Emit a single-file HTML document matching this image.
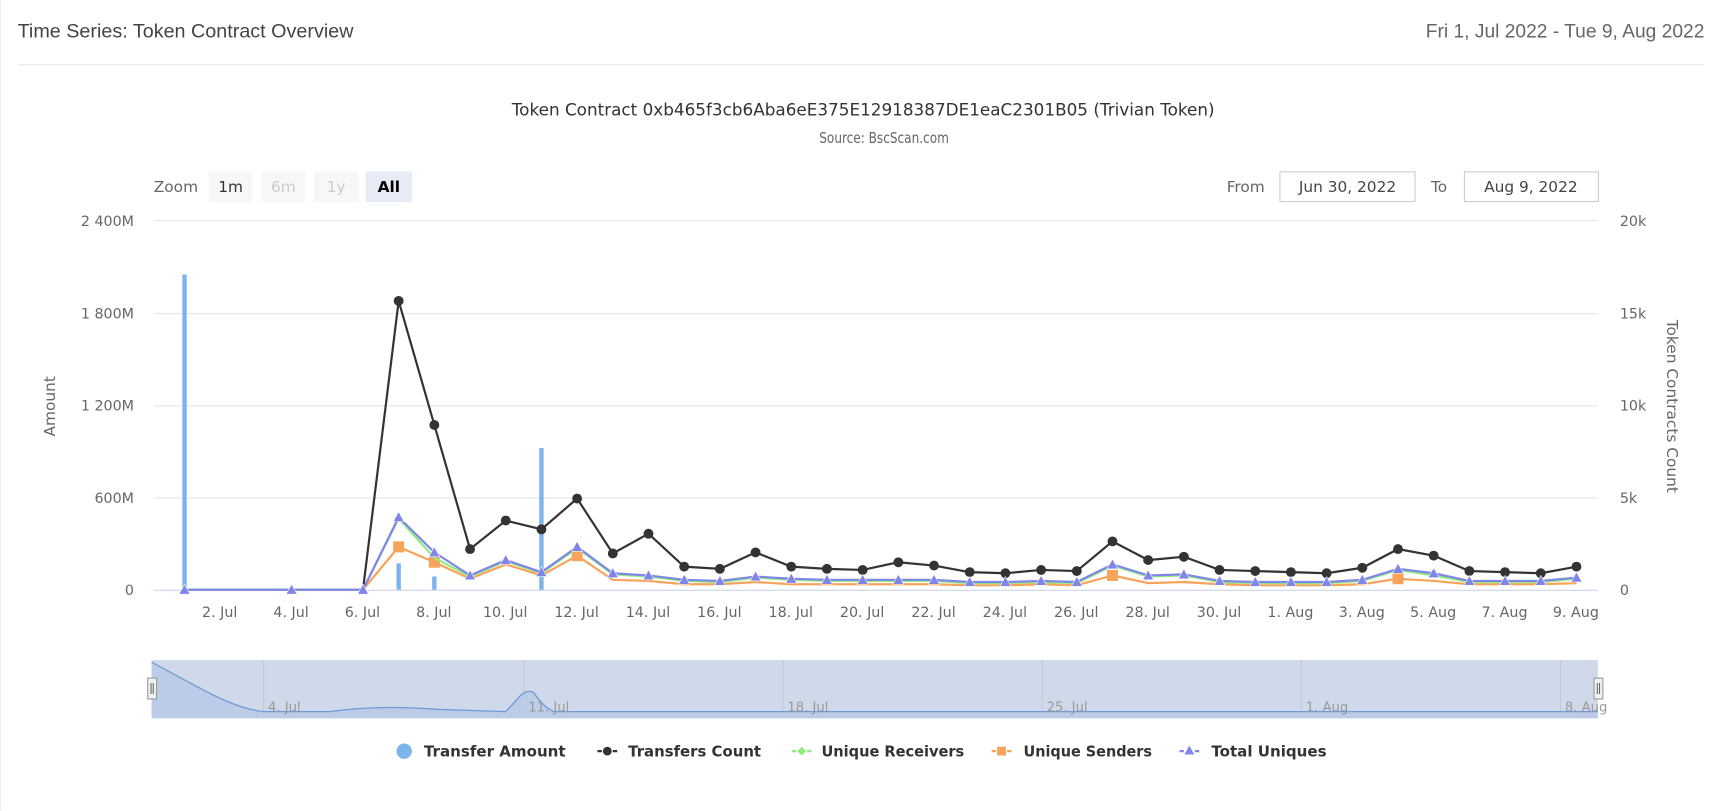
<!DOCTYPE html>
<html><head><meta charset="utf-8"><style>
html,body{margin:0;padding:0;background:#fff;}
svg{display:block;font-family:"Liberation Sans",sans-serif;}
</style></head><body>
<svg width="1722" height="811" viewBox="0 0 1568 738.5" xmlns="http://www.w3.org/2000/svg">
<rect x="0" y="0" width="1568" height="738.5" fill="#fff"/>
<line x1="0.5" y1="0" x2="0.5" y2="738" stroke="#eee"/>
<text x="16" y="34" font-size="18" fill="#444">Time Series: Token Contract Overview</text>
<text x="1552" y="34" font-size="17.5" fill="#666" text-anchor="end">Fri 1, Jul 2022 - Tue 9, Aug 2022</text>
<line x1="16" y1="59" x2="1552" y2="59" stroke="#eee" stroke-width="1.5"/>
<g font-family="DejaVu Sans,sans-serif">
<text x="786" y="105" font-size="15" fill="#333" text-anchor="middle" textLength="640" lengthAdjust="spacingAndGlyphs">Token Contract 0xb465f3cb6Aba6eE375E12918387DE1eaC2301B05 (Trivian Token)</text>
<text x="805" y="130" font-size="14" fill="#666" text-anchor="middle" textLength="118" lengthAdjust="spacingAndGlyphs">Source: BscScan.com</text>
<text x="140" y="175" font-size="14" fill="#666">Zoom</text>
<rect x="190" y="156" width="40" height="28" fill="#f7f7f7"/><text x="210" y="175" font-size="14" fill="#333" text-anchor="middle">1m</text>
<rect x="238" y="156" width="40" height="28" fill="#f7f7f7"/><text x="258" y="175" font-size="14" fill="#ccc" text-anchor="middle">6m</text>
<rect x="286" y="156" width="40" height="28" fill="#f7f7f7"/><text x="306" y="175" font-size="14" fill="#ccc" text-anchor="middle">1y</text>
<rect x="333" y="156" width="42" height="28" fill="#e6ebf5"/><text x="354" y="175" font-size="14" fill="#000" font-weight="bold" text-anchor="middle">All</text>
<text x="1117" y="175" font-size="14" fill="#666">From</text>
<rect x="1165.5" y="156.5" width="123" height="27" fill="#fff" stroke="#ccc"/><text x="1227" y="175" font-size="14" fill="#444" text-anchor="middle">Jun 30, 2022</text>
<text x="1303" y="175" font-size="14" fill="#666">To</text>
<rect x="1333.5" y="156.5" width="122" height="27" fill="#fff" stroke="#ccc"/><text x="1394" y="175" font-size="14" fill="#444" text-anchor="middle">Aug 9, 2022</text>
</g>
<g stroke="#e6e6e6" stroke-width="1">
<line x1="140" y1="201" x2="1455" y2="201"/><line x1="140" y1="285.5" x2="1455" y2="285.5"/><line x1="140" y1="369.5" x2="1455" y2="369.5"/><line x1="140" y1="453.5" x2="1455" y2="453.5"/>
</g>
<line x1="140" y1="537.5" x2="1455" y2="537.5" stroke="#ccd6eb"/>
<g font-family="DejaVu Sans,sans-serif" font-size="13" fill="#666">
<text x="122" y="206" text-anchor="end">2 400M</text><text x="122" y="290" text-anchor="end">1 800M</text><text x="122" y="374" text-anchor="end">1 200M</text><text x="122" y="458" text-anchor="end">600M</text><text x="122" y="542" text-anchor="end">0</text>
<text x="1475" y="206">20k</text><text x="1475" y="290">15k</text><text x="1475" y="374">10k</text><text x="1475" y="458">5k</text><text x="1475" y="542">0</text>
<text transform="translate(50,370) rotate(-90)" text-anchor="middle" font-size="14">Amount</text>
<text transform="translate(1518,370) rotate(90)" text-anchor="middle" font-size="14">Token Contracts Count</text>
<g text-anchor="middle">
<text x="200" y="562">2. Jul</text><text x="265" y="562">4. Jul</text><text x="330" y="562">6. Jul</text><text x="395" y="562">8. Jul</text><text x="460" y="562">10. Jul</text><text x="525" y="562">12. Jul</text><text x="590" y="562">14. Jul</text><text x="655" y="562">16. Jul</text><text x="720" y="562">18. Jul</text><text x="785" y="562">20. Jul</text><text x="850" y="562">22. Jul</text><text x="915" y="562">24. Jul</text><text x="980" y="562">26. Jul</text><text x="1045" y="562">28. Jul</text><text x="1110" y="562">30. Jul</text><text x="1175" y="562">1. Aug</text><text x="1240" y="562">3. Aug</text><text x="1305" y="562">5. Aug</text><text x="1370" y="562">7. Aug</text><text x="1435" y="562">9. Aug</text>
</g></g>
<g stroke="#7cb5ec" stroke-width="4">
<line x1="168" y1="250" x2="168" y2="537"/><line x1="363" y1="513" x2="363" y2="537"/><line x1="395.5" y1="525" x2="395.5" y2="537"/><line x1="493" y1="408" x2="493" y2="537"/>
</g>
<polyline fill="none" stroke="#333" stroke-width="2" points="168,537 265.5,537 330.5,537 363,274 395.5,387 428,500 460.5,474 493,482 525.5,454 558,504 590.5,486 623,516 655.5,518 688,503 720.5,516 753,518 785.5,519 818,512 850.5,515 883,521 915.5,522 948,519 980.5,520 1013,493 1045.5,510 1078,507 1110.5,519 1143,520 1175.5,521 1208,522 1240.5,517 1273,500 1305.5,506 1338,520 1370.5,521 1403,522 1435.5,516"/>
<g fill="#333">
<circle cx="363" cy="274" r="4.5"/><circle cx="395.5" cy="387" r="4.5"/><circle cx="428" cy="500" r="4.5"/><circle cx="460.5" cy="474" r="4.5"/><circle cx="493" cy="482" r="4.5"/><circle cx="525.5" cy="454" r="4.5"/><circle cx="558" cy="504" r="4.5"/><circle cx="590.5" cy="486" r="4.5"/><circle cx="623" cy="516" r="4.5"/><circle cx="655.5" cy="518" r="4.5"/><circle cx="688" cy="503" r="4.5"/><circle cx="720.5" cy="516" r="4.5"/><circle cx="753" cy="518" r="4.5"/><circle cx="785.5" cy="519" r="4.5"/><circle cx="818" cy="512" r="4.5"/><circle cx="850.5" cy="515" r="4.5"/><circle cx="883" cy="521" r="4.5"/><circle cx="915.5" cy="522" r="4.5"/><circle cx="948" cy="519" r="4.5"/><circle cx="980.5" cy="520" r="4.5"/><circle cx="1013" cy="493" r="4.5"/><circle cx="1045.5" cy="510" r="4.5"/><circle cx="1078" cy="507" r="4.5"/><circle cx="1110.5" cy="519" r="4.5"/><circle cx="1143" cy="520" r="4.5"/><circle cx="1175.5" cy="521" r="4.5"/><circle cx="1208" cy="522" r="4.5"/><circle cx="1240.5" cy="517" r="4.5"/><circle cx="1273" cy="500" r="4.5"/><circle cx="1305.5" cy="506" r="4.5"/><circle cx="1338" cy="520" r="4.5"/><circle cx="1370.5" cy="521" r="4.5"/><circle cx="1403" cy="522" r="4.5"/><circle cx="1435.5" cy="516" r="4.5"/>
</g>
<polyline fill="none" stroke="#f7a35c" stroke-width="2" points="168,537 265.5,537 330.5,537 363,498 395.5,512 428,527 460.5,514 493,524 525.5,506 558,528 590.5,529 623,532 655.5,532 688,530 720.5,532 753,532 785.5,532 818,532 850.5,532 883,533 915.5,533 948,532 980.5,533 1013,524 1045.5,531 1078,530 1110.5,532 1143,533 1175.5,533 1208,533 1240.5,532 1273,527 1305.5,529 1338,532 1370.5,532 1403,532 1435.5,531"/>
<g fill="#f7a35c"><rect x="358" y="493" width="10" height="10"/><rect x="390.5" y="507" width="10" height="10"/><rect x="520.5" y="501" width="10" height="10"/><rect x="1008" y="519" width="10" height="10"/><rect x="1268" y="522" width="10" height="10"/></g>
<polyline fill="none" stroke="#90ed7d" stroke-width="2" points="168,537 265.5,537 330.5,537 363,472 395.5,508 428,525 460.5,511 493,522 525.5,499 558,523 590.5,525 623,529 655.5,530 688,526 720.5,528 753,529 785.5,529 818,529 850.5,529 883,531 915.5,531 948,530 980.5,531 1013,515 1045.5,525 1078,524 1110.5,530 1143,531 1175.5,531 1208,531 1240.5,529 1273,519 1305.5,524 1338,530 1370.5,530 1403,530 1435.5,527"/>
<polyline fill="none" stroke="#8085e9" stroke-width="2" points="168,537 265.5,537 330.5,537 363,471 395.5,503 428,524 460.5,510 493,521 525.5,498 558,522 590.5,524 623,528 655.5,529 688,525 720.5,527 753,528 785.5,528 818,528 850.5,528 883,530 915.5,530 948,529 980.5,530 1013,514 1045.5,524 1078,523 1110.5,529 1143,530 1175.5,530 1208,530 1240.5,528 1273,518 1305.5,522 1338,529 1370.5,529 1403,529 1435.5,526"/>
<g fill="#8085e9" stroke="#fff" stroke-width="0.5">
<path d="M168,532l5,9h-10z"/><path d="M265.5,532l5,9h-10z"/><path d="M330.5,532l5,9h-10z"/><path d="M363,466l5,9h-10z"/><path d="M395.5,498l5,9h-10z"/><path d="M428,519l5,9h-10z"/><path d="M460.5,505l5,9h-10z"/><path d="M493,516l5,9h-10z"/><path d="M525.5,493l5,9h-10z"/><path d="M558,517l5,9h-10z"/><path d="M590.5,519l5,9h-10z"/><path d="M623,523l5,9h-10z"/><path d="M655.5,524l5,9h-10z"/><path d="M688,520l5,9h-10z"/><path d="M720.5,522l5,9h-10z"/><path d="M753,523l5,9h-10z"/><path d="M785.5,523l5,9h-10z"/><path d="M818,523l5,9h-10z"/><path d="M850.5,523l5,9h-10z"/><path d="M883,525l5,9h-10z"/><path d="M915.5,525l5,9h-10z"/><path d="M948,524l5,9h-10z"/><path d="M980.5,525l5,9h-10z"/><path d="M1013,509l5,9h-10z"/><path d="M1045.5,519l5,9h-10z"/><path d="M1078,518l5,9h-10z"/><path d="M1110.5,524l5,9h-10z"/><path d="M1143,525l5,9h-10z"/><path d="M1175.5,525l5,9h-10z"/><path d="M1208,525l5,9h-10z"/><path d="M1240.5,523l5,9h-10z"/><path d="M1273,513l5,9h-10z"/><path d="M1305.5,517l5,9h-10z"/><path d="M1338,524l5,9h-10z"/><path d="M1370.5,524l5,9h-10z"/><path d="M1403,524l5,9h-10z"/><path d="M1435.5,521l5,9h-10z"/>
</g>
<rect x="138" y="601" width="1317" height="53" fill="#cfd9ea"/>
<g stroke="#bfc9da"><line x1="240" y1="601" x2="240" y2="654"/><line x1="477" y1="601" x2="477" y2="654"/><line x1="713" y1="601" x2="713" y2="654"/><line x1="949" y1="601" x2="949" y2="654"/><line x1="1185" y1="601" x2="1185" y2="654"/><line x1="1421" y1="601" x2="1421" y2="654"/></g>
<path d="M138,603 C180,625 210,645 240,648 L300,648 C330,644 360,643 400,646 L460,648 C470,640 475,627 485,630 C490,635 495,645 505,648 L1455,648 L1455,654 L138,654Z" fill="#bccbe6"/>
<path d="M138,603 C180,625 210,645 240,648 L300,648 C330,644 360,643 400,646 L460,648 C470,640 475,627 485,630 C490,635 495,645 505,648 L1455,648" fill="none" stroke="#6f9bd8" stroke-width="1.2"/>
<g font-family="DejaVu Sans,sans-serif" font-size="12" fill="#999">
<text x="244" y="648">4. Jul</text><text x="481" y="648">11. Jul</text><text x="717" y="648">18. Jul</text><text x="953" y="648">25. Jul</text><text x="1189" y="648">1. Aug</text><text x="1425" y="648">8. Aug</text>
</g>
<g fill="#f2f2f2" stroke="#999"><rect x="134.5" y="617.5" width="8" height="19"/><rect x="1451.5" y="617.5" width="8" height="19"/></g>
<g stroke="#666"><line x1="137.5" y1="622" x2="137.5" y2="632"/><line x1="139.5" y1="622" x2="139.5" y2="632"/><line x1="1454.5" y1="622" x2="1454.5" y2="632"/><line x1="1456.5" y1="622" x2="1456.5" y2="632"/></g>
<g font-family="DejaVu Sans,sans-serif" font-size="14" fill="#333" font-weight="bold">
<circle cx="368" cy="684" r="7" fill="#7cb5ec"/><text x="386" y="689" textLength="129" lengthAdjust="spacingAndGlyphs">Transfer Amount</text>
<line x1="544" y1="684" x2="562" y2="684" stroke="#333" stroke-width="2" stroke-dasharray="4,3"/><circle cx="553" cy="684" r="4" fill="#333"/><text x="572" y="689" textLength="121" lengthAdjust="spacingAndGlyphs">Transfers Count</text>
<line x1="721" y1="684" x2="739" y2="684" stroke="#90ed7d" stroke-width="2" stroke-dasharray="4,3"/><path d="M730,680l4,4l-4,4l-4,-4z" fill="#90ed7d"/><text x="748" y="689" textLength="130" lengthAdjust="spacingAndGlyphs">Unique Receivers</text>
<line x1="903" y1="684" x2="921" y2="684" stroke="#f7a35c" stroke-width="2" stroke-dasharray="4,3"/><rect x="908" y="680" width="8" height="8" fill="#f7a35c"/><text x="932" y="689" textLength="117" lengthAdjust="spacingAndGlyphs">Unique Senders</text>
<line x1="1074" y1="684" x2="1092" y2="684" stroke="#8085e9" stroke-width="2" stroke-dasharray="4,3"/><path d="M1083,679l4.5,8h-9z" fill="#8085e9"/><text x="1103" y="689" textLength="105" lengthAdjust="spacingAndGlyphs">Total Uniques</text>
</g>
</svg>
</body></html>
